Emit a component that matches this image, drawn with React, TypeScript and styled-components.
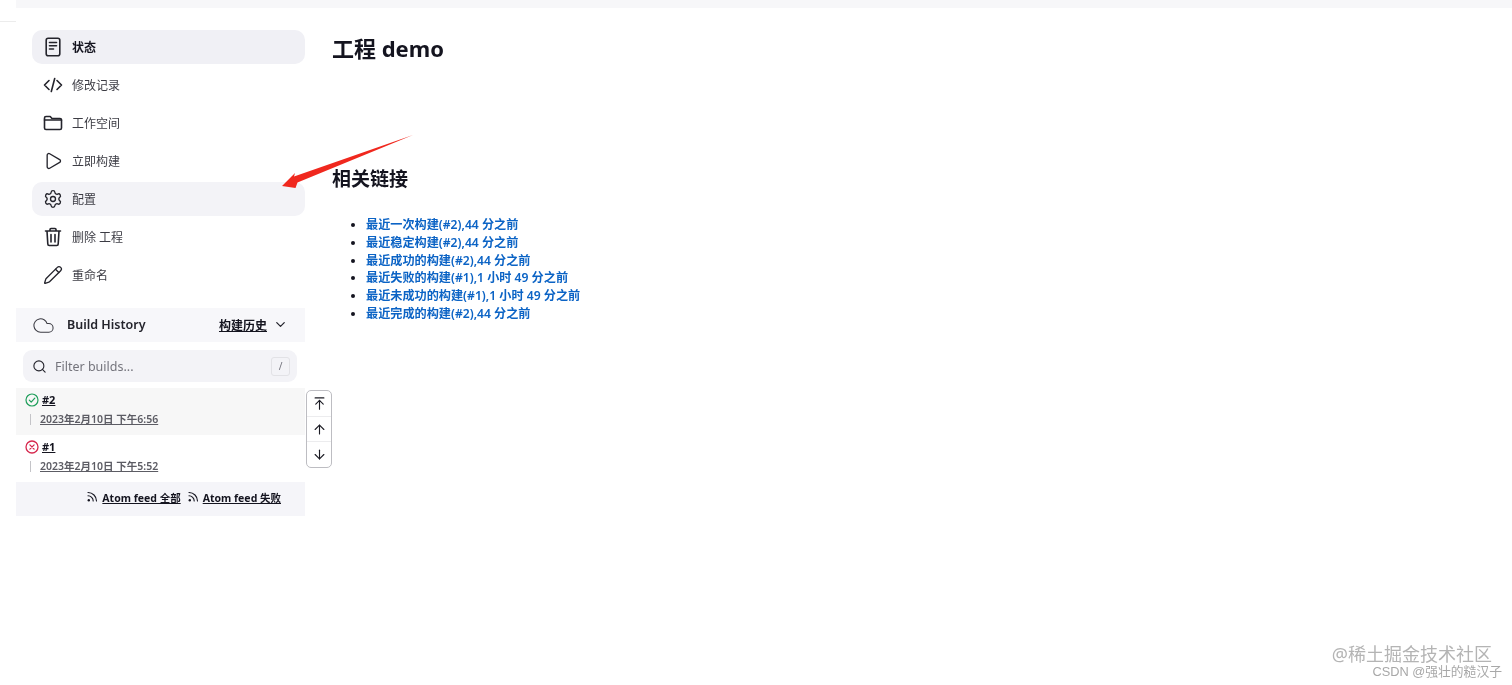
import React from "react";
import styled, { createGlobalStyle } from "styled-components";
import { Search, ChevronDown, ArrowUp, ArrowDown, ArrowUpToLine, Cloud, Play, Settings, Pencil } from "lucide-react";

const Global = createGlobalStyle`
  html, body { margin: 0; padding: 0; background: #fff; }
  body { font-family: "Noto Sans", "Noto Sans CJK SC", sans-serif; color: #14141f; }
  a { color: inherit; }
`;
const Page = styled.div`
  position: relative; width: 1512px; height: 685px; overflow: hidden;
  background: #fff; filter: blur(0.45px);
`;
const TopBar = styled.div`margin-left: 16px; height: 8px; background: #f7f7f9;`;
const Tick = styled.div`
  position: absolute; left: 0; top: 21px; width: 16px; height: 1px; background: #ececec;
`;
const Body = styled.div`display: flex; padding-top: 22px;`;
const Side = styled.aside`
  width: 289px; margin-left: 16px; flex: none; display: flex; flex-direction: column;
`;
const Nav = styled.nav`display: flex; flex-direction: column; gap: 4px; padding-left: 16px;`;
const NavItem = styled.a<{ $tone?: "active" | "hover" }>`
  height: 34px; box-sizing: border-box; display: flex; align-items: center; gap: 9px; padding: 1px 0 0 11px;
  border-radius: 10px; font-size: 12px; line-height: 32px;
  font-weight: ${p => (p.$tone === "active" ? 700 : 400)};
  color: ${p => (p.$tone === "active" ? "#14141f" : "#3c3c44")};
  background: ${p => (p.$tone === "active" ? "#f0f0f5" : p.$tone === "hover" ? "#f3f3f7" : "transparent")};
  svg { width: 20px; height: 20px; stroke-width: 1.6; color: #24242c; flex: none; margin-top: -1px; }
`;
const Widget = styled.section`margin-top: 16px; display: flex; flex-direction: column;`;
const WidgetHead = styled.header`
  height: 34px; box-sizing: border-box; background: #f7f7fa; display: flex; align-items: center;
  padding: 0 17px 1px 16px; font-size: 12.5px; font-weight: 600; color: #24242c;
`;
const CloudIcon = styled(Cloud)`width: 23px; height: 23px; stroke-width: 1.1; color: #3c3c44; margin-top: 2px;`;
const HeadTitle = styled.span`margin-left: 12px; flex: 1;`;
const HeadLink = styled.a`
  font-size: 12px; font-weight: 600; text-decoration: underline; color: #14141f;
`;
const Chevron = styled(ChevronDown)`width: 15px; height: 15px; margin-left: 6px; color: #24242c;`;
const SearchBox = styled.div`
  margin: 8px 8px 6px 7px; height: 32px; border-radius: 9px; background: #f3f3f7;
  display: flex; align-items: center; padding: 0 7px 0 9px; font-size: 12.5px; color: #74747c;
`;
const SearchIcon = styled(Search)`width: 15px; height: 15px; color: #24242c; margin-right: 8px; stroke-width: 1.8;`;
const SearchText = styled.span`flex: 1;`;
const Key = styled.span`
  width: 17px; height: 17px; border: 1px solid #e2e2e6; border-radius: 3px; display: flex;
  align-items: center; justify-content: center; font-size: 10px; color: #70707a;
`;
const Row = styled.div<{ $shade?: boolean }>`
  height: 47px; box-sizing: border-box; background: ${p => (p.$shade ? "#f7f7f7" : "#fff")};
  padding: 4px 0 0 9px; display: flex; flex-direction: column; gap: 4px;
`;
const RowTop = styled.div`display: flex; align-items: center; gap: 3px; font-size: 11px; line-height: 15px; font-weight: 700;`;
const RowLink = styled.a`text-decoration: underline; color: #14141f;`;
const RowDate = styled.a`
  margin-left: 5px; padding-left: 10px; font-size: 10.5px; line-height: 16px; font-weight: 600; color: #5c5c64;
  text-decoration: underline; position: relative; white-space: nowrap;
  &::before { content: ""; position: absolute; left: 0; top: 3px; height: 11px; width: 1px; background: #c4c4c8; }
`;
const Feeds = styled.footer`
  height: 34px; box-sizing: border-box; background: #f5f5f9; display: flex; align-items: center; justify-content: flex-end;
  gap: 7px; padding: 0 24px 3px 0; font-size: 10.5px; font-weight: 700;
`;
const Feed = styled.a`
  display: flex; align-items: center; gap: 3px; color: #14141f;
  span { text-decoration: underline; }
  svg { width: 12px; height: 12px; margin-top: -3px; flex: none; }
`;
const ScrollBox = styled.div`
  position: absolute; left: 306px; top: 390px; width: 26px; height: 78px; box-sizing: border-box;
  border: 1px solid #bdbdc2; border-radius: 5px; background: #fff; display: flex; flex-direction: column;
`;
const ScrollBtn = styled.div`
  flex: 1; display: flex; align-items: center; justify-content: center;
  & + & { border-top: 1px solid #ececee; }
  svg { width: 15px; height: 15px; color: #1c1c24; stroke-width: 1.8; }
`;
const Main = styled.main`margin-left: 27px; flex: 1;`;
const Title = styled.h1`
  margin: 0; font-size: 22px; line-height: 36px; font-weight: 700; color: #14141f;
`;
const SubTitle = styled.h2`
  margin: 100px 0 0; font-size: 19px; line-height: 26px; font-weight: 700; color: #14141f;
`;
const Links = styled.ul`
  margin: 24px 0 0; padding: 0 0 0 34px; font-size: 12.15px; line-height: 17.8px; font-weight: 600;
  color: #14141f;
`;
const Lnk = styled.a`color: #0b63c5;`;
const Arrow = styled.svg`position: absolute; left: 280px; top: 132px;`;
const Mark = styled.div`
  position: absolute; right: 20px; top: 642px; font-size: 18px; line-height: 24px; color: #b4b4b4;
  white-space: nowrap;
`;
const Credit = styled.div`
  position: absolute; right: 10px; top: 664px; font-size: 12.8px; line-height: 16px; color: #a8a8a8; white-space: nowrap;
  font-family: "Liberation Sans", "Noto Sans CJK SC", sans-serif;
`;

const Stroke = { fill: "none", stroke: "currentColor", strokeLinecap: "round", strokeLinejoin: "round" } as const;

const DocIcon = () => (
  <svg viewBox="0 0 20 20" {...Stroke}>
    <rect x="3.2" y="1.2" width="13.6" height="17.6" rx="2" />
    <path d="M6.5 5.5h7M6.5 8.8h7M6.5 12h4" />
  </svg>
);
const CodeIcon = () => (
  <svg viewBox="0 0 20 20" {...Stroke}>
    <path d="M6 5.5 1.5 10 6 14.5M14 5.5l4.5 4.5L14 14.5M11.7 3.5 8.3 16.5" />
  </svg>
);
const FolderIcon = () => (
  <svg viewBox="0 0 20 20" {...Stroke}>
    <path d="M1.5 5A1.5 1.5 0 0 1 3 3.5h4.2l1.8 2h8A1.5 1.5 0 0 1 18.5 7v8a1.5 1.5 0 0 1-1.5 1.5H3A1.5 1.5 0 0 1 1.5 15Z" />
    <path d="M1.5 7h17" />
  </svg>
);
const TrashIcon = () => (
  <svg viewBox="0 0 20 20" {...Stroke}>
    <path d="M2.5 4h15M7 4V2.5a1 1 0 0 1 1-1h4a1 1 0 0 1 1 1V4M4 4l.8 13a1.5 1.5 0 0 0 1.5 1.5h7.4a1.5 1.5 0 0 0 1.5-1.5L16 4M8 7.5v7.5M12 7.5v7.5" />
  </svg>
);
const FeedIcon = () => (
  <svg viewBox="0 0 12 12" fill="none" stroke="currentColor" strokeWidth="1.1" strokeLinecap="round">
    <circle cx="1.8" cy="10.2" r="1.2" fill="currentColor" stroke="none" />
    <path d="M1 5.8A5.2 5.2 0 0 1 6.2 11M1 2.5A8.5 8.5 0 0 1 9.5 11" />
  </svg>
);
const OkIcon = () => (
  <svg width="14" height="14" viewBox="0 0 14 14" fill="none" stroke="#1e9e5a" strokeWidth="1.2" strokeLinecap="round" strokeLinejoin="round">
    <circle cx="7" cy="7" r="6" />
    <path d="M4.3 7.2 6.2 9.1 9.8 5.2" />
  </svg>
);
const BadIcon = () => (
  <svg width="14" height="14" viewBox="0 0 14 14" fill="none" stroke="#d6274d" strokeWidth="1.3" strokeLinecap="round">
    <circle cx="7" cy="7" r="6" />
    <path d="M4.9 4.9l4.2 4.2M9.1 4.9 4.9 9.1" />
  </svg>
);

const nav = [
  { t: "状态", I: DocIcon, tone: "active" as const },
  { t: "修改记录", I: CodeIcon },
  { t: "工作空间", I: FolderIcon },
  { t: "立即构建", I: Play },
  { t: "配置", I: Settings, tone: "hover" as const },
  { t: "删除 工程", I: TrashIcon },
  { t: "重命名", I: Pencil },
];
const links = [
  "最近一次构建(#2),44 分之前",
  "最近稳定构建(#2),44 分之前",
  "最近成功的构建(#2),44 分之前",
  "最近失败的构建(#1),1 小时 49 分之前",
  "最近未成功的构建(#1),1 小时 49 分之前",
  "最近完成的构建(#2),44 分之前",
];

export default function App() {
  return (
    <Page>
      <Global />
      <TopBar />
      <Tick />
      <Body>
        <Side>
          <Nav>
            {nav.map(({ t, I, tone }) => (
              <NavItem key={t} $tone={tone}><I />{t}</NavItem>
            ))}
          </Nav>
          <Widget>
            <WidgetHead>
              <CloudIcon />
              <HeadTitle>Build History</HeadTitle>
              <HeadLink>构建历史</HeadLink>
              <Chevron />
            </WidgetHead>
            <SearchBox>
              <SearchIcon />
              <SearchText>Filter builds...</SearchText>
              <Key>/</Key>
            </SearchBox>
            <Row $shade>
              <RowTop><OkIcon /><RowLink>#2</RowLink></RowTop>
              <RowDate>2023年2月10日 下午6:56</RowDate>
            </Row>
            <Row>
              <RowTop><BadIcon /><RowLink>#1</RowLink></RowTop>
              <RowDate>2023年2月10日 下午5:52</RowDate>
            </Row>
            <Feeds>
              <Feed><FeedIcon /><span>Atom feed 全部</span></Feed>
              <Feed><FeedIcon /><span>Atom feed 失败</span></Feed>
            </Feeds>
          </Widget>
        </Side>
        <Main>
          <Title>工程 demo</Title>
          <SubTitle>相关链接</SubTitle>
          <Links>
            {links.map(l => <li key={l}><Lnk>{l}</Lnk></li>)}
          </Links>
        </Main>
      </Body>
      <ScrollBox>
        <ScrollBtn><ArrowUpToLine /></ScrollBtn>
        <ScrollBtn><ArrowUp /></ScrollBtn>
        <ScrollBtn><ArrowDown /></ScrollBtn>
      </ScrollBox>
      <Arrow width="136" height="58" viewBox="0 0 136 58">
        <path d="M2 54 L15 41 L14 44.5 L133 3 L17.5 50.5 L15.5 56 Z" fill="#f0281e" />
      </Arrow>
      <Mark>@稀土掘金技术社区</Mark>
      <Credit>CSDN @强壮的糙汉子</Credit>
    </Page>
  );
}
